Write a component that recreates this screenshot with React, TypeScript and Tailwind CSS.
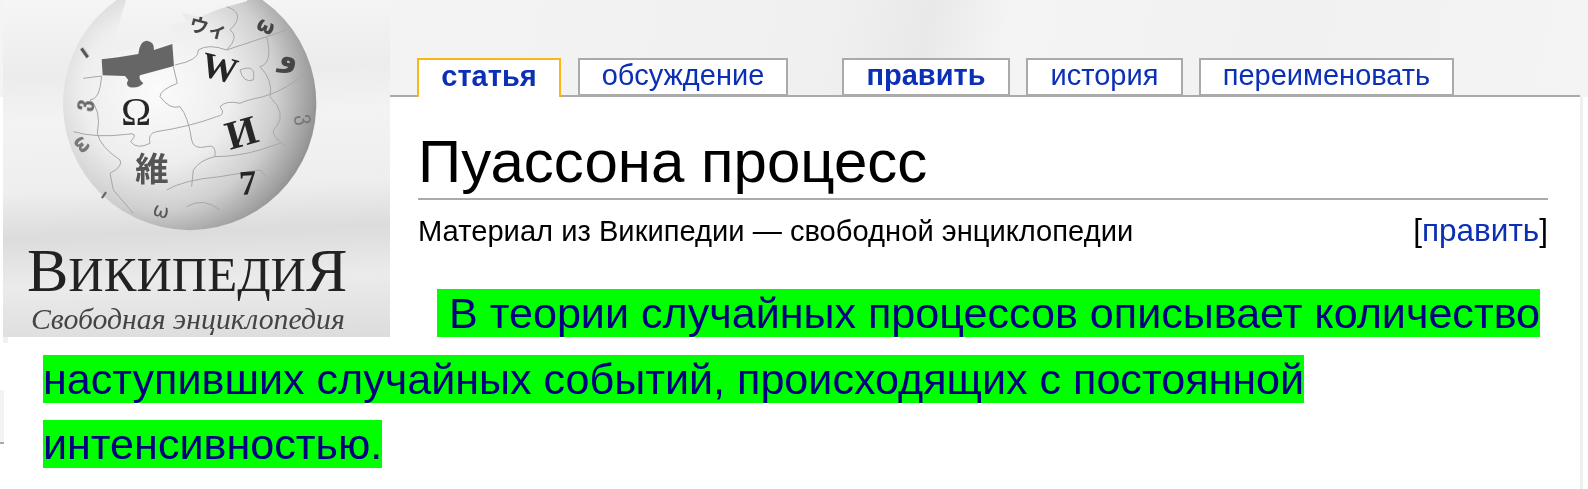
const tabs = [
  { label: 'статья', width: 'w-[144px]', active: true, bold: true, gap: 'mr-[17px]' },
  { label: 'обсуждение', width: 'w-[210px]', gap: 'mr-[54px]' },
  { label: 'править', width: 'w-[168px]', bold: true, gap: 'mr-[16px]' },
  { label: 'история', width: 'w-[157px]', gap: 'mr-[16px]' },
  { label: 'переименовать', width: 'w-[255px]', gap: '' },
];

// drawn in the coordinates of a 3x crop of the logo, hence the scale
const Globe = () => (
  <svg viewBox="0 0 387 236" className="block w-[387px] h-[236px] shrink-0">
    <defs>
      <radialGradient id="globeFill" gradientUnits="userSpaceOnUse" cx="290" cy="270" r="500">
        <stop offset="0%" stopColor="#fbfbfb" />
        <stop offset="45%" stopColor="#eeeeee" />
        <stop offset="72%" stopColor="#cfcfcf" />
        <stop offset="92%" stopColor="#a0a0a0" />
        <stop offset="100%" stopColor="#8a8a8a" />
      </radialGradient>
      <filter id="soft" x="-5%" y="-5%" width="110%" height="110%">
        <feGaussianBlur stdDeviation="1.6" />
      </filter>
    </defs>
    <g transform="translate(57 0) scale(0.3333)" filter="url(#soft)">
      <path
        d="M205 -22A380 380 0 1 0 573 -22L560 4L500 20L470 30L420 50L365 40L382 66L322 76L355 108L376 120L340 130L250 122L235 140L175 155L165 120L180 60Z"
        fill="url(#globeFill)"
      />
      <path
        d="M125 178L175 172L235 162Q238 124 260 122Q284 125 282 150L337 132L342 198L240 226Q234 238 250 250Q236 266 210 262Q194 255 205 240L195 228L128 226Z"
        fill="#666"
      />
      <g fill="none" stroke="#a6a6a6" strokeWidth="3">
        <path d="M70 235L125 228M125 228Q120 300 90 300Q125 330 112 400Q120 440 180 480Q190 500 150 520L160 570L220 640" />
        <path d="M40 395Q110 415 200 403Q240 395 212 425Q230 450 270 430Q262 400 290 395Q390 380 470 350Q500 345 480 320Q500 300 540 310Q560 300 610 290Q680 270 750 210" />
        <path d="M340 200L352 250Q300 270 300 290Q330 330 360 320Q385 350 395 420Q400 450 440 440Q470 430 465 470Q420 480 400 510L395 560" />
        <path d="M345 195Q420 180 415 150Q445 130 500 150Q560 130 620 110L680 90" />
        <path d="M500 20Q560 40 510 90Q540 110 500 150M620 110Q640 190 600 200Q640 240 630 290Q680 340 650 380Q620 400 680 440" />
        <path d="M540 210Q590 190 580 240Q550 250 540 210M465 470Q530 470 600 450L660 430M320 570Q370 540 480 530L600 510L620 530M380 620Q430 590 480 630" />
      </g>
      <g fill="#262626" className="font-['Liberation_Serif',serif]">
        <text x="183" y="374" fontSize="122">Ω</text>
        <text x="418" y="226" fontSize="108" fontWeight="700" transform="rotate(14 418 226)">W</text>
        <text x="510" y="450" fontSize="122" fontWeight="700" transform="rotate(-16 510 450)">И</text>
        <text x="540" y="585" fontSize="104" fontWeight="700" transform="rotate(-4 540 585)">7</text>
      </g>
      <g fill="#444" className="font-['Noto_Sans_CJK_JP',sans-serif]">
        <text x="226" y="542" fontSize="100" fontWeight="700" fill="#555">維</text>
        <text x="384" y="90" fontSize="58" fontWeight="700" transform="rotate(14 384 90)">ウィ</text>
      </g>
      <g className="font-['DejaVu_Sans',sans-serif]">
        <text x="655" y="195" fontSize="90" fontWeight="700" fill="#444" transform="rotate(10 655 195)">و</text>
        <text x="585" y="85" fontSize="62" fontWeight="700" fill="#444" transform="rotate(25 585 85)">ω</text>
        <text x="715" y="345" fontSize="64" fill="#777" transform="rotate(80 715 345)">ვ</text>
        <text x="28" y="330" fontSize="64" fontWeight="700" fill="#666" transform="rotate(-82 60 300)">ვ</text>
        <text x="30" y="440" fontSize="58" fontWeight="700" fill="#777" transform="rotate(50 50 440)">ω</text>
        <text x="280" y="650" fontSize="58" fill="#555" transform="rotate(15 300 630)">ω</text>
        <text x="120" y="590" fontSize="40" fontWeight="700" fill="#666" transform="rotate(35 120 590)">ו</text>
        <text x="60" y="170" fontSize="60" fontWeight="700" fill="#555" transform="rotate(-35 80 150)">ו</text>
      </g>
    </g>
  </svg>
);

export default function App() {
  return (
    <div className="relative w-[1588px] h-[489px] overflow-hidden bg-white font-['Liberation_Sans',sans-serif]">
      <div className="float-left w-[390px] pl-[3px]">
        <div className="w-[387px] h-[337px] flex flex-col bg-[linear-gradient(178deg,#f6f6f6_0%,#ececec_22%,#f3f3f3_35%,#eeeeee_55%,#dcdcdc_68%,#ebebeb_82%,#dcdcdc_100%)]">
          <Globe />
          <div className="pl-[24px] pt-[2px] h-[67px] text-[62px] leading-[64px] text-[#222] font-['Liberation_Serif',serif] whitespace-nowrap blur-[0.5px]">
            В<span className="text-[49px]">ИКИПЕДИ</span>Я
          </div>
          <div className="pl-[28px] text-[29.8px] leading-[32px] italic text-[#444] font-['Liberation_Serif',serif] whitespace-nowrap blur-[0.4px]">Свободная энциклопедия</div>
        </div>
        <div className="w-[5px] h-[6px] bg-[#f0f0f0]" />
      </div>
      <div className="h-[97px] bg-[linear-gradient(102deg,#f4f4f4_0%,#f3f3f3_30%,#f0f0f0_52%,#e9e9e9_58%,#f4f4f4_63%,#f1f1f1_80%,#f4f4f4_100%)]">
        <div className="h-[97px] mr-[8px] pl-[27px] flex items-end border-b-2 border-[#aaa]">
          {tabs.map((t) => (
            <div key={t.label} className={`${t.width} ${t.gap} flex items-center justify-center bg-white border-2 text-[29px] leading-none text-[#0b2fb5] ${t.active ? 'h-[39px] -mb-[2px] pb-[4px] border-[#fcb514] border-b-0' : 'h-[38px] -mb-[1px] pb-[3px] border-[#aaa]'} ${t.bold ? 'font-bold' : ''}`}>
              {t.label}
            </div>
          ))}
        </div>
      </div>
      <div className="flow-root pl-[28px] pr-[40px]">
        <h1 className="text-[60px] leading-[70px] pt-[30px] text-black border-b-2 border-[#aaa] h-[103px]">Пуассона процесс</h1>
        <div className="flex justify-between items-baseline h-[47px] text-[29.15px] leading-[32px] pt-[14px] text-black">
          <span>Материал из Википедии — свободной энциклопедии</span>
          <span className="text-[31.5px]">[<span className="text-[#0b2fb5]">править</span>]</span>
        </div>
      </div>
      <p className="pl-[43px] pt-[34px] text-[43.1px] leading-[65.5px] indent-[47px] text-[#000080]">
        <span className="bg-[#00ff00]">{'\u00a0'}В теории случайных процессов описывает количество наступивших случайных событий, происходящих с постоянной интенсивностью.</span>
      </p>
      <div className="absolute left-0 top-[390px] w-[4px] h-[54px] bg-[#f3f3f3] border-b-2 border-[#aaa]" />
      <div className="absolute left-[1580px] top-[97px] bottom-0 w-[3px] bg-[#efefef]" />
    </div>
  );
}
